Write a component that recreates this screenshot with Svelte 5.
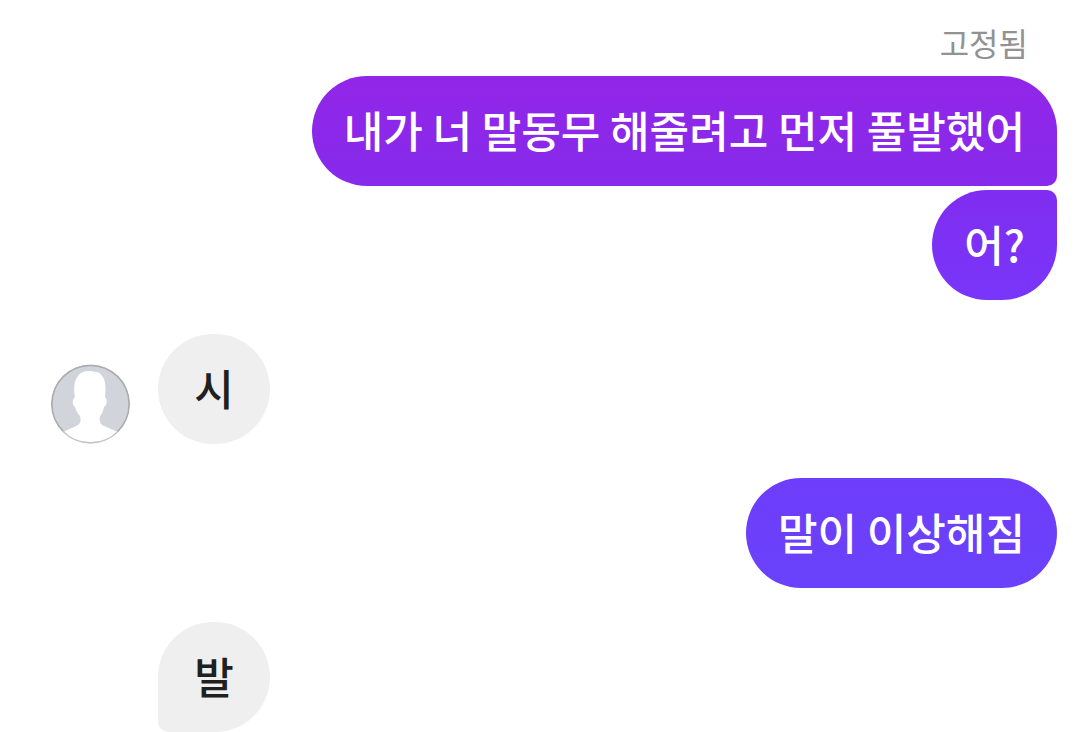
<script>
  const groups = [
    {
      sent: true,
      messages: [
        { text: '내가 너 말동무 해줄려고 먼저 풀발했어', tone: 'violet', shape: 'first' },
        { text: '어?', tone: 'purple', shape: 'last' }
      ]
    },
    { sent: false, avatar: true, messages: [{ text: '시', tone: 'gray', shape: 'single' }] },
    { sent: true, messages: [{ text: '말이 이상해짐', tone: 'indigo', shape: 'single' }] },
    { sent: false, messages: [{ text: '발', tone: 'gray', shape: 'opening' }] }
  ];
</script>

<main class="chat">
  <p class="pinned">고정됨</p>
  {#each groups as group}
    <section class="group" class:sent={group.sent}>
      {#if !group.sent}
        <div class="avatar-slot">
          {#if group.avatar}
            <svg class="avatar" viewBox="0 0 80 80" aria-hidden="true">
              <defs><clipPath id="face"><circle cx="40.5" cy="40" r="39.5" /></clipPath></defs>
              <g clip-path="url(#face)">
                <rect width="80" height="80" fill="#d1d5db" />
                <circle cx="40.5" cy="40" r="38.7" fill="none" stroke="#aaacb0" stroke-width="1.8" />
                <path
                  fill="#fff"
                  d="M9 71C15 66 23 64 28 61C31 59 31 56 30 52C27 49 26 46 25 43C22 41 22 35 25 33C24 27 23 18 28 12C31 7 38 6 46 8C49 8 51 10 52 12C56 16 56 26 55 33C58 35 57 41 54 43C53 47 52 50 50 52C49 57 50 60 54 62C60 65 67 67 73 71V80H9Z"
                />
                <path d="M12.5 67A38.7 38.7 0 0 0 68.5 67" fill="none" stroke="#c4c5c7" stroke-width="1.8" />
              </g>
            </svg>
          {/if}
        </div>
      {/if}
      <div class="messages">
        {#each group.messages as message}
          <p class="bubble {message.tone} {message.shape}">{message.text}</p>
        {/each}
      </div>
    </section>
  {/each}
</main>

<style>
  :global(body) {
    margin: 0;
    background: #fff;
  }
  .chat {
    display: flex;
    flex-direction: column;
    gap: 34px;
    padding: 26px 23px 0 50px;
    font-family: 'Noto Sans CJK KR', 'Noto Sans', sans-serif;
  }
  p {
    margin: 0;
  }
  .pinned {
    align-self: flex-end;
    margin: 0 29px -16px 0;
    color: #929292;
    font-size: 32px;
    line-height: 32px;
  }
  .group {
    display: flex;
    align-items: flex-end;
  }
  .sent {
    justify-content: flex-end;
  }
  .avatar-slot {
    flex: none;
    width: 80px;
    margin-right: 28px;
  }
  .avatar {
    display: block;
    width: 80px;
    height: 80px;
  }
  .messages {
    display: flex;
    flex-direction: column;
    align-items: flex-start;
    gap: 4px;
  }
  .sent .messages {
    align-items: flex-end;
  }
  .bubble {
    box-sizing: border-box;
    min-width: 112px;
    padding: 21px 32px 25px;
    border-radius: 55px;
    color: #fff;
    font-size: 43px;
    font-weight: 500;
    line-height: 64px;
    text-align: center;
  }
  .first {
    border-bottom-right-radius: 10px;
  }
  .last {
    border-top-right-radius: 10px;
  }
  .opening {
    border-bottom-left-radius: 10px;
  }
  .violet {
    background: linear-gradient(#9226e8, #862aeb);
  }
  .purple {
    background: linear-gradient(#802df0, #7836fa);
  }
  .indigo {
    background: linear-gradient(#6e3dfb, #6a42fb);
  }
  .gray {
    background: #efefef;
    color: #202020;
  }
</style>
